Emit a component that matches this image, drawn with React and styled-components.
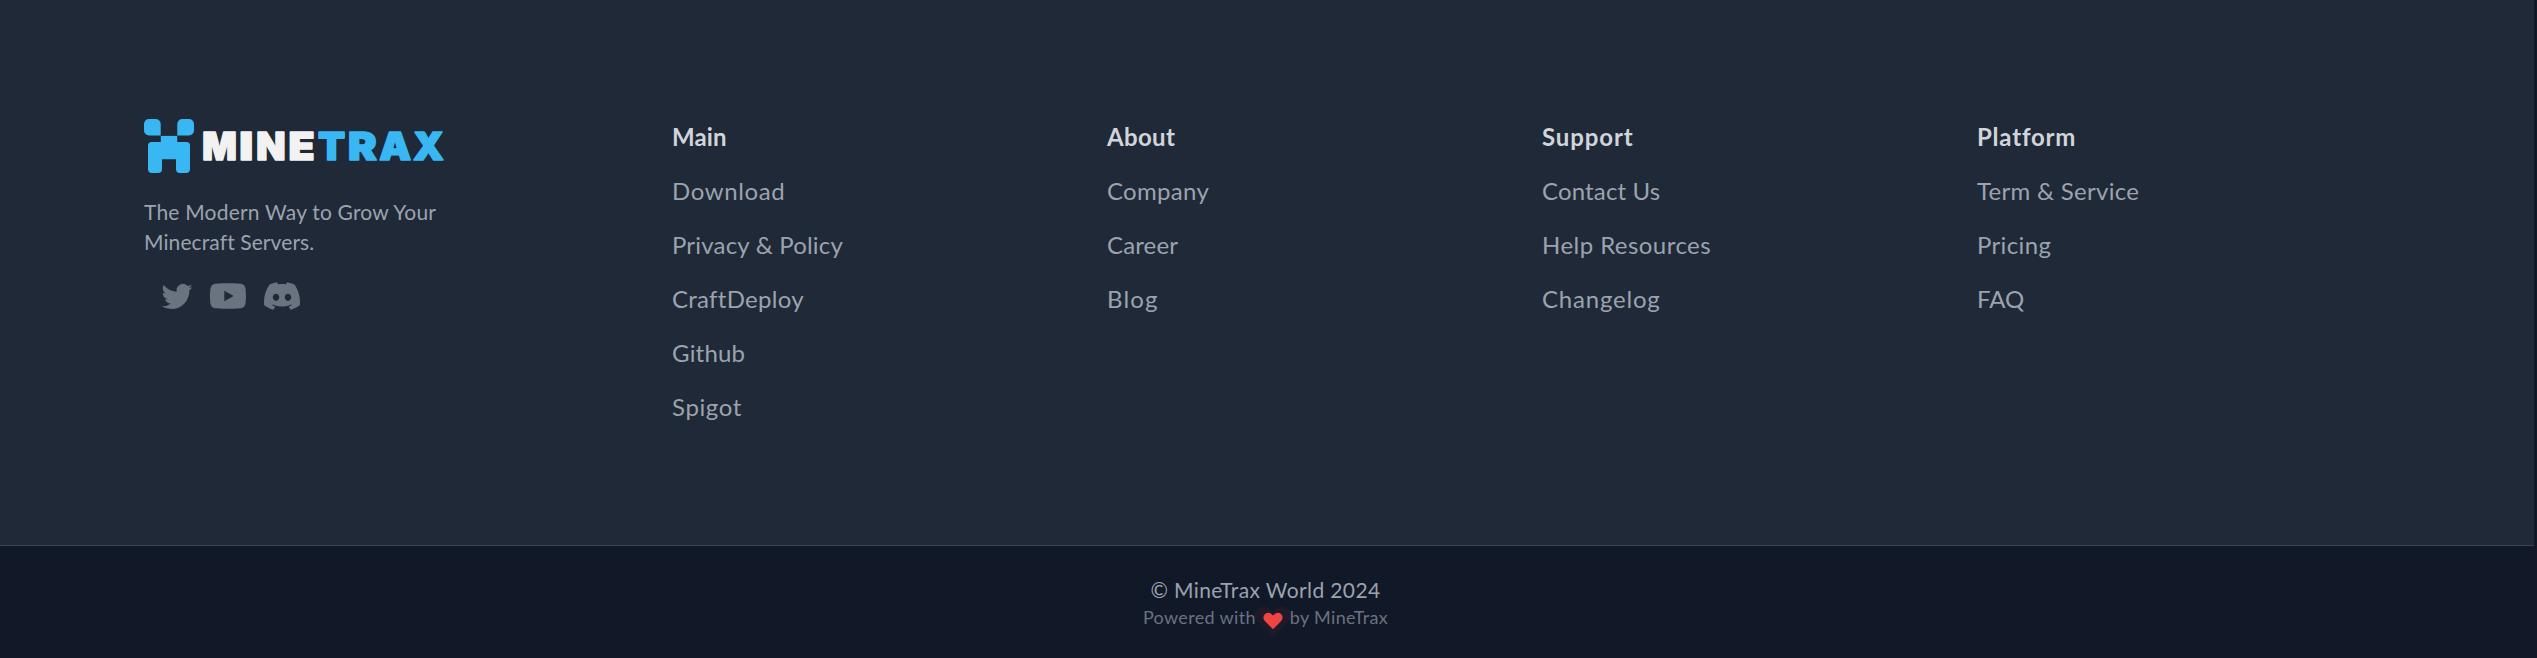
import React from 'react';
import styled, { createGlobalStyle } from 'styled-components';
import { SiYoutube, SiDiscord } from 'react-icons/si';

const GlobalStyle = createGlobalStyle`
  * { box-sizing: border-box; }
  body { margin: 0; background: #111827; font-family: Lato, "Open Sans", sans-serif; }
`;

const Page = styled.div`
  width: 100%;
  height: 658px;
  padding-right: 3px;
  background: #111827;
  overflow: hidden;
`;

const Footer = styled.footer`
  height: 545px;
  padding: 117px 0 0 143px;
  display: flex;
  background: #1f2937;
`;

const Brand = styled.section`
  width: 529px;
  display: flex;
  flex-direction: column;
`;

const LogoSvg = styled.svg`
  display: block;
  width: 304px;
  height: 58px;
  font-family: Inter, sans-serif;
  font-weight: 900;
  font-size: 39px;
`;

const Tagline = styled.p`
  margin: 22px 0 0;
  padding-left: 1px;
  color: #9ca3af;
  font-size: 21px;
  line-height: 30px;
`;

const Line = styled.span`
  display: block;
  letter-spacing: ${(p) => p.$spacing}px;
`;

const Socials = styled.div`
  display: flex;
  align-items: center;
  gap: 18px;
  height: 36px;
  margin-top: 21px;
  padding-left: 18px;
  color: #6b7280;
`;

const SocialLink = styled.a`
  display: flex;
  color: inherit;
`;

const Columns = styled.nav`
  display: grid;
  grid-template-columns: repeat(4, 435px);
`;

const Column = styled.ul`
  list-style: none;
  margin: 0;
  padding: 2px 0 0;
  display: flex;
  flex-direction: column;
  gap: 18px;
  font-size: 24px;
  line-height: 36px;
`;

const Heading = styled.li`
  color: #d1d5db;
  font-weight: 700;
  letter-spacing: ${(p) => p.$spacing}px;
`;

const Item = styled.li`
  color: #9ca3af;
  letter-spacing: ${(p) => p.$spacing}px;
`;

const BottomBar = styled.div`
  height: 113px;
  padding: 29px 3px 0 0;
  border-top: 1px solid #374151;
  background: #111827;
  display: flex;
  flex-direction: column;
  align-items: center;
`;

const Copyright = styled.div`
  color: #9ca3af;
  font-size: 21px;
  line-height: 30px;
  letter-spacing: 0.38px;
`;

const Powered = styled.div`
  display: flex;
  align-items: center;
  gap: 5px;
  height: 27px;
  margin-top: -1px;
  color: #6b7280;
  font-size: 18px;
  line-height: 27px;
  letter-spacing: 0.33px;
`;

const HeartBox = styled.span`
  position: relative;
  display: block;
  width: 24px;
  height: 24px;
  margin-top: 4px;
  color: #ef4444;
`;

const HeartSvg = styled.svg`
  display: block;
  width: 24px;
  height: 24px;
  position: relative;
`;

const HeartPulse = styled(HeartSvg)`
  position: absolute;
  inset: 0;
  opacity: 0.06;
  transform: scale(1.86);
`;

const columns = [
  { title: ['Main', 0.1], items: [['Download', 0.6], ['Privacy & Policy', 0.19], ['CraftDeploy', 0.29], ['Github', 0.2], ['Spigot', 0.63]] },
  { title: ['About', 0.35], items: [['Company', 0.31], ['Career', 0.14], ['Blog', 1.2]] },
  { title: ['Support', 0.88], items: [['Contact Us', 0.15], ['Help Resources', 0.45], ['Changelog', 0.79]] },
  { title: ['Platform', 0.79], items: [['Term & Service', 0.29], ['Pricing', 0.35], ['FAQ', 0]] },
];

// letter, left edge, drawn width
const letters = [
  ['M', 59.2, 34.5],
  ['I', 96.3, 13.9],
  ['N', 113.2, 29.3],
  ['E', 145.4, 26.1],
  ['T', 174.9, 27.2],
  ['R', 204.9, 28.8],
  ['A', 236.3, 31.9],
  ['X', 269.9, 30.9],
];

function Logo() {
  return (
    <LogoSvg viewBox="0 0 304 58" role="img" aria-label="MineTrax">
      <g fill="#39b7f3">
        <path d="M6 2h6.7a5 5 0 0 1 5 5v11.4H6a5 5 0 0 1-5-5V7a5 5 0 0 1 5-5z" />
        <path d="M39.3 2H46a5 5 0 0 1 5 5v6.4a5 5 0 0 1-5 5H34.3V7a5 5 0 0 1 5-5z" />
        <rect x="17.8" y="18.9" width="16.4" height="6.4" />
        <path d="M8.5 25h35a3.5 3.5 0 0 1 3.5 3.5V52a4 4 0 0 1-4 4h-6a4 4 0 0 1-4-4v-9.7H19V52a4 4 0 0 1-4 4H9a4 4 0 0 1-4-4V28.5A3.5 3.5 0 0 1 8.5 25z" />
      </g>
      {letters.map(([ch, x, w], i) => {
        const color = i < 4 ? '#f2f2f2' : '#39b7f3';
        return (
          <text key={ch} x={x} y="43.2" textLength={w} lengthAdjust="spacingAndGlyphs"
            fill={color} stroke={color} strokeWidth="1.6" strokeLinejoin="round">{ch}</text>
        );
      })}
    </LogoSvg>
  );
}

const heartPath = 'M3.172 5.172a4 4 0 015.656 0L10 6.343l1.172-1.171a4 4 0 115.656 5.656L10 17.657l-6.828-6.829a4 4 0 010-5.656z';

function Heart() {
  return (
    <HeartBox>
      <HeartPulse viewBox="0 0 20 20" fill="currentColor"><path d={heartPath} /></HeartPulse>
      <HeartSvg viewBox="0 0 20 20" fill="currentColor"><path d={heartPath} /></HeartSvg>
    </HeartBox>
  );
}

function Twitter() {
  return (
    <svg width="31" height="31" viewBox="-0.4 0 24 24" fill="currentColor" overflow="visible">
      <path d="M23.953 4.57a10 10 0 01-2.825.775 4.958 4.958 0 002.163-2.723c-.951.555-2.005.959-3.127 1.184a4.92 4.92 0 00-8.384 4.482C7.69 8.095 4.067 6.13 1.64 3.162a4.822 4.822 0 00-.666 2.475c0 1.71.87 3.213 2.188 4.096a4.904 4.904 0 01-2.228-.616v.06a4.923 4.923 0 003.946 4.827 4.996 4.996 0 01-2.212.085 4.936 4.936 0 004.604 3.417 9.867 9.867 0 01-6.102 2.105c-.39 0-.779-.023-1.17-.067a13.995 13.995 0 007.557 2.209c9.053 0 13.998-7.496 13.998-13.985 0-.21 0-.42-.015-.63A9.935 9.935 0 0024 4.59z" />
    </svg>
  );
}

export default function App() {
  return (
    <>
      <GlobalStyle />
      <Page>
        <Footer>
          <Brand>
            <Logo />
            <Tagline>
              <Line $spacing={0.2}>The Modern Way to Grow Your</Line>
              <Line $spacing={0.1}>Minecraft Servers.</Line>
            </Tagline>
            <Socials>
              <SocialLink><Twitter /></SocialLink>
              <SocialLink><SiYoutube size={36} /></SocialLink>
              <SocialLink><SiDiscord size={36} /></SocialLink>
            </Socials>
          </Brand>
          <Columns>
            {columns.map(({ title, items }) => (
              <Column key={title[0]}>
                <Heading $spacing={title[1]}>{title[0]}</Heading>
                {items.map(([label, spacing]) => (
                  <Item key={label} $spacing={spacing}>{label}</Item>
                ))}
              </Column>
            ))}
          </Columns>
        </Footer>
        <BottomBar>
          <Copyright>© MineTrax World 2024</Copyright>
          <Powered>
            <span>Powered with</span>
            <Heart />
            <span>by MineTrax</span>
          </Powered>
        </BottomBar>
      </Page>
    </>
  );
}
